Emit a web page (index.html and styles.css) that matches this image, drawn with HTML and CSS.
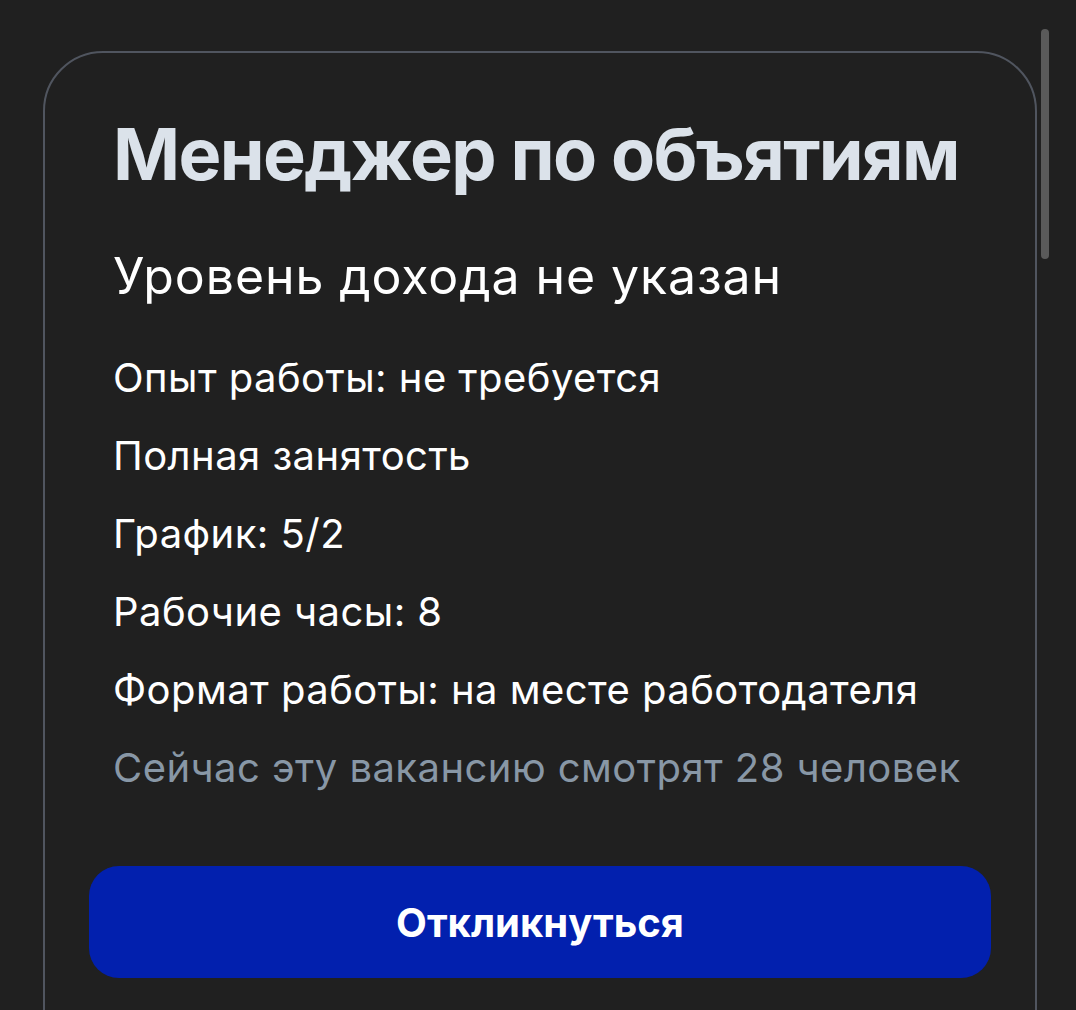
FILE: index.html
```html
<!DOCTYPE html>
<html lang="ru">
<head>
  <meta charset="UTF-8" />
  <meta name="viewport" content="width=device-width, initial-scale=1.0"/>
  <title>Менеджер по объятиям</title>
  <link rel="stylesheet" href="styles.css">
</head>
<body>
  <div class="scrollbar"></div>

  <section class="vacancy">
    <div class="vacancy-info">
      <h1 class="vacancy-title">Менеджер по объятиям</h1>
      <h2 class="vacancy-salary">Уровень дохода не указан</h2>

      <ul class="vacancy-facts">
        <li>Опыт работы: не требуется</li>
        <li>Полная занятость</li>
        <li>График: 5/2</li>
        <li>Рабочие часы: 8</li>
        <li>Формат работы: на месте работодателя</li>
        <li class="muted">Сейчас эту вакансию смотрят 28 человек</li>
      </ul>
    </div>

    <button class="respond-btn">Откликнуться</button>
  </section>
</body>
</html>
```

FILE: styles.css
```css
:root {
  --bg: #202020;
  --card-border: #50555f;
  --title: #dbe2ea;
  --muted: #8897a6;
  --accent: #0220ae;
}

* {
  box-sizing: border-box;
}

body {
  margin: 0;
  height: 100vh;
  overflow: hidden;
  background: var(--bg);
  color: #ffffff;
  font-family: Inter, 'Noto Sans', sans-serif;
}

/* overlay scrollbar thumb */
.scrollbar {
  position: fixed;
  top: 29px;
  right: 27px;
  width: 8px;
  height: 230px;
  border-radius: 4px;
  background: #5a5a5a;
}

.vacancy {
  width: 994px;
  margin: 51px 0 0 43px;
  padding: 58px 44px 120px;
  border: 2px solid var(--card-border);
  border-radius: 60px;
}

.vacancy-info {
  padding: 0 24px;
  white-space: nowrap;
}

.vacancy-title {
  margin: 0;
  font-size: 72px;
  line-height: 86px;
  font-weight: 700;
  letter-spacing: -1.6px;
  color: var(--title);
}

.vacancy-salary {
  margin: 49px 0 0;
  font-size: 50px;
  line-height: 60px;
  font-weight: 400;
  letter-spacing: 0.9px;
}

.vacancy-facts {
  list-style: none;
  margin: 33px 0 0;
  padding: 0;
  font-size: 40px;
  line-height: 78px;
  letter-spacing: 0.45px;
}

.vacancy-facts .muted {
  color: var(--muted);
}

.respond-btn {
  display: block;
  width: 100%;
  height: 112px;
  margin-top: 59px;
  border: none;
  border-radius: 30px;
  background: var(--accent);
  color: #ffffff;
  font-family: inherit;
  font-size: 40px;
  font-weight: 700;
  cursor: pointer;
}
```
